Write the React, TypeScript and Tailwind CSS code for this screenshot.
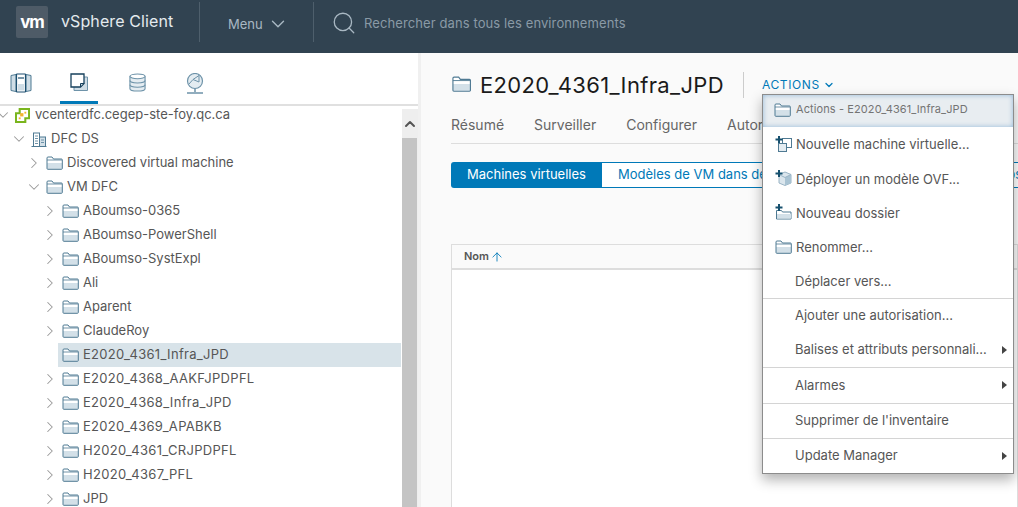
import React from 'react';
import { ChevronDown, ChevronRight, ChevronUp, Search, ArrowUp } from 'lucide-react';

const FONT = "font-['Inter','Noto_Sans',sans-serif]";

const Folder = ({ className = '' }: { className?: string }) => (
  <svg viewBox="0 0 17 14" className={className} fill="none">
    <path d="M1 12.5V2a1 1 0 0 1 1-1h4l1.5 2H15.5a.8.8 0 0 1 .8.8v8.7a.8.8 0 0 1-.8.8H1.8a.8.8 0 0 1-.8-.8z" fill="#fff" />
    <rect x="1" y="7" width="15.3" height="6" fill="#d3e0e8" />
    <path d="M1 12.5V2a1 1 0 0 1 1-1h4l1.5 2H15.5a.8.8 0 0 1 .8.8v8.7a.8.8 0 0 1-.8.8H1.8a.8.8 0 0 1-.8-.8z" stroke="#4f7a93" strokeWidth="1" />
    <path d="M1 4h15" stroke="#4f7a93" strokeWidth="0.8" />
  </svg>
);

const Plus = () => (
  <path d="M4 0v7M0.500 3.500h7" stroke="#16506e" strokeWidth="2" />
);

const NewVmIcon = () => (
  <svg viewBox="0 0 17 16" className="h-[16px] w-[17px]" fill="none">
    <rect x="7.500" y="2.500" width="9" height="9" fill="#fff" stroke="#4f7a93" />
    <rect x="3.500" y="7.500" width="8" height="8" fill="#e4ecf1" stroke="#4f7a93" />
    <Plus />
  </svg>
);

const OvfIcon = () => (
  <svg viewBox="0 0 17 16" className="h-[16px] w-[17px]" fill="none">
    <path d="M4 4.500l6-2.500 6 2.500v8.500l-6 2.500-6-2.500z" fill="#dbe6ed" stroke="#9ab4c5" />
    <path d="M10 7.500l6-3v8.500l-6 2.500z" fill="#a9c3d3" />
    <path d="M4 4.500l6 3 6-3" stroke="#9ab4c5" />
    <Plus />
  </svg>
);

const NewFolderIcon = () => (
  <svg viewBox="0 0 17 16" className="h-[16px] w-[17px]" fill="none">
    <path d="M1.500 15V6.500h5l1 1.500h8.500V15z" fill="#fff" stroke="#4f7a93" />
    <rect x="2" y="10" width="14" height="4.500" fill="#d3e0e8" />
    <Plus />
  </svg>
);

const TabIcons = [
  <svg key="hosts" viewBox="0 0 22 20" className="h-[20px] w-[22px]" fill="none">
    <path d="M1 2.500l5-1v17l-5-1zM21 2.500l-5-1v17l5-1z" fill="#cfdde6" stroke="#4f7a93" />
    <rect x="6.500" y="1" width="9" height="18" rx="0.500" fill="#fff" stroke="#1d4f70" strokeWidth="1.200" />
    <rect x="8" y="11" width="6" height="6.500" fill="#cfdde6" />
    <path d="M8 5h6" stroke="#1d4f70" strokeWidth="1.200" />
  </svg>,
  <svg key="vms" viewBox="0 0 18 18" className="h-[18px] w-[18px]" fill="none">
    <path d="M4 4h13.500v13.500H4z" fill="#cfdde6" stroke="#6e93a9" />
    <path d="M1 1h13v9.500L10.500 14H1z" fill="#fff" stroke="#16405c" strokeWidth="1.300" />
    <path d="M14 10.500h-3.500V14z" fill="#cfdde6" stroke="#16405c" />
  </svg>,
  <svg key="storage" viewBox="0 0 18 20" className="h-[19px] w-[17px]" fill="none">
    <path d="M1 3.500v13c0 1.500 3.500 2.500 8 2.500s8-1 8-2.500v-13" fill="#e4ecf1" stroke="#6e93a9" strokeWidth="1.200" />
    <ellipse cx="9" cy="3.500" rx="8" ry="2.500" fill="#fff" stroke="#6e93a9" strokeWidth="1.200" />
    <path d="M1 8c0 1.500 3.500 2.500 8 2.500S17 9.500 17 8M1 12.500c0 1.500 3.500 2.500 8 2.500s8-1 8-2.500" stroke="#6e93a9" strokeWidth="1.200" />
  </svg>,
  <svg key="network" viewBox="0 0 18 21" className="h-[21px] w-[18px]" fill="none">
    <circle cx="9" cy="8" r="7.500" fill="#e4ecf1" stroke="#6e93a9" strokeWidth="1.200" />
    <path d="M3 11l4-4.500 6-4M7 6.500l6 2.500M13 2.500V9" stroke="#6e93a9" />
    <path d="M9 15.500V19M1 20h16" stroke="#6e93a9" strokeWidth="1.500" />
  </svg>,
];

const folders = [
  { name: 'ABoumso-0365' },
  { name: 'ABoumso-PowerShell' },
  { name: 'ABoumso-SystExpl' },
  { name: 'Ali' },
  { name: 'Aparent' },
  { name: 'ClaudeRoy' },
  { name: 'E2020_4361_Infra_JPD', selected: true, leaf: true, wide: true },
  { name: 'E2020_4368_AAKFJPDPFL', wide: true },
  { name: 'E2020_4368_Infra_JPD', wide: true },
  { name: 'E2020_4369_APABKB', wide: true },
  { name: 'H2020_4361_CRJPDPFL', wide: true },
  { name: 'H2020_4367_PFL', wide: true },
  { name: 'JPD' },
];

const TreeRow = ({ indent, open, leaf, children, selected }: { indent: string; open?: boolean; leaf?: boolean; children: React.ReactNode; selected?: boolean }) => (
  <div className={`flex h-6 items-center text-[13px] text-[#565656] ${indent}`}>
    <span className="flex w-4 shrink-0 items-center justify-center text-[#999999]">
      {leaf ? null : open ? (
        <ChevronDown size={18} strokeWidth={1.4} className="shrink-0" />
      ) : (
        <ChevronRight size={18} strokeWidth={1.4} className="shrink-0" />
      )}
    </span>
    <div className={`flex h-6 flex-1 items-center gap-[4px] pl-[4px] whitespace-nowrap ${selected ? 'bg-[#d8e3e9]' : ''}`}>{children}</div>
  </div>
);

const Tree = () => (
  <div className="-mt-[3px] pr-px">
    <TreeRow indent="-ml-[5px]" open>
      <svg viewBox="0 0 16 16" className="h-[15px] w-[15px] shrink-0" fill="none">
        <path d="M1 5.500h4V1h10v10h-4v4H1z" fill="#fff" stroke="#7ab51d" strokeWidth="2.200" />
        <rect x="5.500" y="5.500" width="3.500" height="3.500" fill="#f2b32c" />
        <rect x="10" y="4" width="2" height="2" fill="#f2b32c" />
        <rect x="4" y="10" width="2" height="2" fill="#f2b32c" />
      </svg>
      <span className="ml-[1px]">vcenterdfc.cegep-ste-foy.qc.ca</span>
    </TreeRow>
    <TreeRow indent="pl-[11px]" open>
      <svg viewBox="0 0 16 15" className="h-[15px] w-[16px]" fill="none">
        <path d="M0.500 14.500h15" stroke="#4f7a93" />
        <rect x="2.500" y="1" width="6" height="13.500" fill="#fff" stroke="#4f7a93" />
        <rect x="8.500" y="5" width="6" height="9.500" fill="#d3e0e8" stroke="#4f7a93" />
        <path d="M4 4h3M4 6.500h3M4 9h3M4 11.500h3M10 8h3M10 10.500h3" stroke="#6e93a9" />
      </svg>
      <span>DFC DS</span>
    </TreeRow>
    <TreeRow indent="pl-[26px]">
      <Folder className="h-[14px] w-[17px]" />
      <span>Discovered virtual machine</span>
    </TreeRow>
    <TreeRow indent="pl-[26px]" open>
      <Folder className="h-[14px] w-[17px]" />
      <span>VM DFC</span>
    </TreeRow>
    {folders.map((f) => (
      <TreeRow key={f.name} indent="pl-[42px]" leaf={f.leaf} selected={f.selected}>
        <Folder className="h-[14px] w-[17px]" />
        <span className={f.wide ? 'tracking-[0.3px]' : ''}>{f.name}</span>
      </TreeRow>
    ))}
  </div>
);

type MenuItem = { label: string; icon?: React.ReactNode; sep?: boolean; sub?: boolean };

const menuItems: MenuItem[] = [
  { label: 'Nouvelle machine virtuelle...', icon: <NewVmIcon /> },
  { label: 'Déployer un modèle OVF...', icon: <OvfIcon /> },
  { label: 'Nouveau dossier', icon: <NewFolderIcon /> },
  { label: 'Renommer...', icon: <Folder className="h-[14px] w-[17px]" /> },
  { label: 'Déplacer vers...', sep: true },
  { label: 'Ajouter une autorisation...' },
  { label: 'Balises et attributs personnali...', sub: true, sep: true },
  { label: 'Alarmes', sub: true, sep: true },
  { label: "Supprimer de l'inventaire", sep: true },
  { label: 'Update Manager', sub: true },
];

const ActionsMenu = () => (
  <div className="absolute left-[762px] top-[94px] w-[252px] border border-[#8c8c8c] bg-white shadow-[0_6px_12px_rgba(0,0,0,0.3)]">
    <div className="flex h-[32px] items-center gap-[5px] bg-[#e8edf1] pb-[3px] pl-[11px] text-[11px] tracking-[0.1px] text-[#747474] shadow-[inset_0_0_5px_rgba(90,150,200,0.6)]">
      <Folder className="h-[14px] w-[17px]" />
      <span>Actions - E2020_4361_Infra_JPD</span>
    </div>
    {menuItems.map((m, i) => (
      <div key={m.label} className={`relative box-content flex h-[34.2px] items-center text-[13px] text-[#565656] ${m.sep ? 'border-b border-[#d4d4d4]' : ''}`}>
        {m.icon ? (
          <span className="flex w-[33px] shrink-0 justify-end pr-[4px]">{m.icon}</span>
        ) : (
          <span className="w-[32px] shrink-0" />
        )}
        <span className={i < 5 ? 'translate-y-px' : ''}>{m.label}</span>
        {m.sub && <span className="absolute right-[6px] h-0 w-0 border-y-[4px] border-l-[5px] border-y-transparent border-l-[#444]" />}
      </div>
    ))}
  </div>
);

export default function App() {
  return (
    <div className={`relative flex h-[507px] w-[1018px] flex-col overflow-hidden bg-[#fafafa] ${FONT}`}>
      <header className="flex h-[53px] shrink-0 items-start bg-[#314351] text-white">
        <div className="ml-4 mt-[6px] flex h-8 w-8 items-center justify-center rounded-[2px] bg-[#4e5b67] text-[17px] font-bold leading-none tracking-[-1px]">vm</div>
        <span className="ml-[13px] mt-[10px] w-[138px] text-[16px] leading-[22px] tracking-[0.1px] text-[#e4eaee]">vSphere Client</span>
        <div className="mt-[2px] h-10 w-px bg-[#4e5f6c]" />
        <div className="ml-[28px] mt-[13px] flex w-[85px] items-center gap-[4px] text-[13px] leading-[20px] text-[#a9b8c3]">
          Menu <ChevronDown size={22} strokeWidth={1.5} className="shrink-0" />
        </div>
        <div className="mt-[2px] h-10 w-px bg-[#4e5f6c]" />
        <Search size={26} strokeWidth={1.2} className="ml-[17px] mt-[10px] text-[#a9b8c3]" />
        <span className="ml-[7px] mt-[13px] text-[13px] leading-[20px] tracking-[0.1px] text-[#8a9aa6]">Rechercher dans tous les environnements</span>
      </header>

      <div className="flex min-h-0 flex-1">
        <aside className="flex w-[421px] shrink-0 flex-col border-r-[3px] border-[#f0f0f0] bg-white">
          <div className="flex h-[53px] shrink-0 items-end border-b-2 border-[#e0e0e0] pl-[2px]">
            {TabIcons.map((icon, i) => (
              <div key={i} className={`mr-[20px] flex h-[38px] w-[38px] items-start justify-center pt-[7px] ${i === 1 ? 'border-b-[3px] border-[#0079b8]' : ''}`}>
                {icon}
              </div>
            ))}
          </div>
          <div className="flex min-h-0 flex-1 overflow-hidden">
            <div className="w-[402px] shrink-0 overflow-hidden">
              <Tree />
            </div>
            <div className="mt-[3px] flex w-[16px] shrink-0 flex-col bg-[#eeeeee]">
              <div className="flex h-[29px] items-center justify-center text-[#555]">
                <ChevronUp size={16} strokeWidth={3} />
              </div>
              <div className="w-[15px] flex-1 bg-[#c4c4c4]" />
            </div>
          </div>
        </aside>

        <main className="min-w-0 flex-1 overflow-hidden pl-[30px]">
          <div className="flex h-[53px] items-start pt-[19px]">
            <Folder className="mt-[4px] h-[16px] w-[21px]" />
            <h1 className="ml-[8px] w-[263px] text-[22px] leading-[26px] tracking-[0.35px] text-[#1a1a1a]">E2020_4361_Infra_JPD</h1>
            <div className="h-[26px] w-px bg-[#cccccc]" />
            <span className="ml-[18px] flex items-center gap-[3px] pt-[5px] text-[12px] leading-[16px] tracking-[0.6px] text-[#0079b8]">
              ACTIONS <ChevronDown size={12} strokeWidth={2.5} />
            </span>
          </div>
          <div className="flex h-[38px] items-center gap-[30px] border-b border-[#dddddd] text-[14px] text-[#666]">
            <span>Résumé</span>
            <span>Surveiller</span>
            <span>Configurer</span>
            <span>Autorisations</span>
          </div>
          <div className="mt-[18px] flex h-[26px] whitespace-nowrap text-[13px]">
            <div className="flex w-[151px] shrink-0 items-center justify-center rounded-l-[3px] bg-[#0079b8] text-white">Machines virtuelles</div>
            <div className="flex flex-1 items-center border-y border-[#0079b8] bg-white pl-[16px] text-[#0079b8]">
              <span className="w-[232px] shrink-0">Modèles de VM dans des dossiers</span>
              <span className="ml-[134px] shrink-0">vApps</span>
            </div>
          </div>
          <div className="mt-[56px] h-[300px] border border-[#dddddd] bg-white">
            <div className="flex h-[25px] items-center border-b-2 border-[#dddddd] bg-[#fafafa] pl-[12px] text-[11px] font-semibold text-[#565656]">
              Nom <ArrowUp size={14} strokeWidth={1.5} className="ml-[1px] text-[#0079b8]" />
            </div>
          </div>
        </main>
      </div>

      <ActionsMenu />
    </div>
  );
}
